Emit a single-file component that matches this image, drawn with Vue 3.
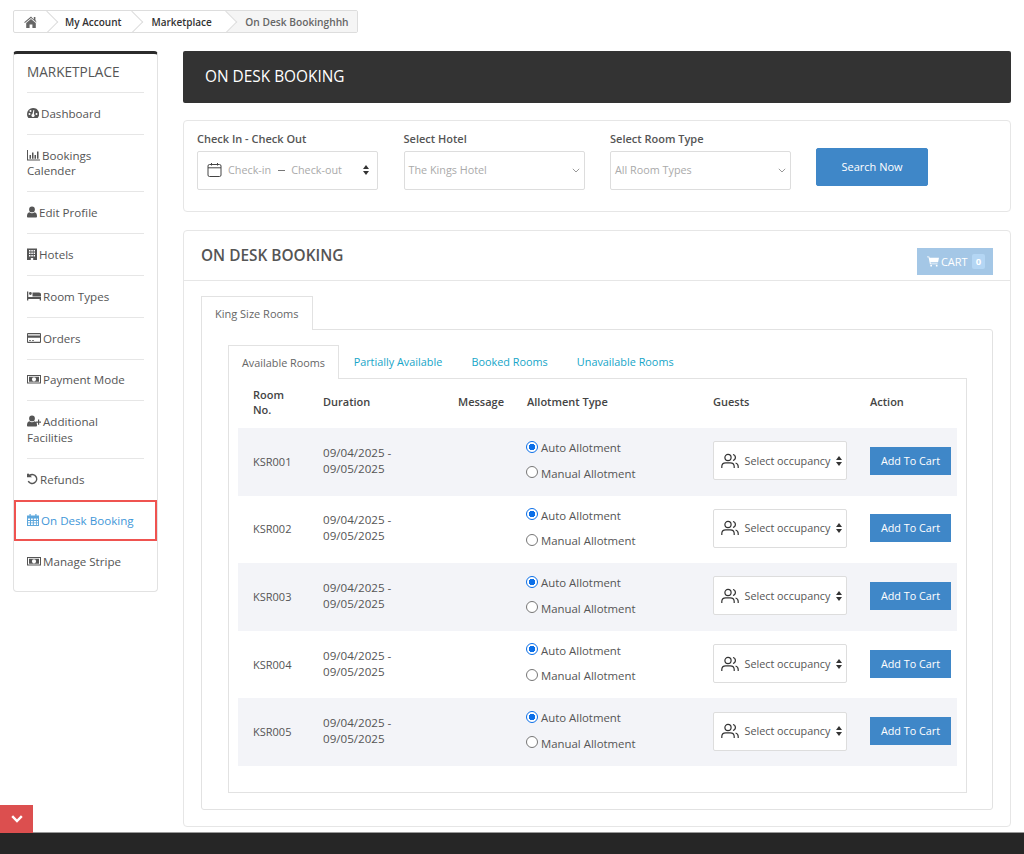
<template>
  <div class="page">
    <div class="content">
      <nav class="crumbs">
        <a class="crumb home">
          <svg width="14" height="12" viewBox="0 0 14 12"><path fill="#666" d="M7 0.6 0.2 6.2l.7.8L7 2l6.1 5 .7-.8-2.4-2V1h-1.6v2.4zM2.2 7v5h3.4V8.4h2.8V12h3.4V7L7 3z" /></svg>
        </a>
        <a class="crumb acct">My Account</a>
        <a class="crumb market">Marketplace</a>
        <a class="crumb last">On Desk Bookinghhh</a>
      </nav>

      <div class="layout">
        <aside class="sidebar">
          <h3>MARKETPLACE</h3>
          <ul>
            <li v-for="item in menu" :key="item.label" :class="{ active: item.active }">
              <svg class="menu-icon" :width="item.w || 13" height="12" :viewBox="`0 0 ${item.w || 13} 12`" v-html="item.icon"></svg>
              {{ item.label }}
            </li>
          </ul>
        </aside>

        <main class="main">
          <div class="banner">ON DESK BOOKING</div>

          <section class="filters">
            <div class="field date">
              <label>Check In - Check Out</label>
              <div class="input">
                <svg width="15" height="16" viewBox="0 0 15 16" fill="none" stroke="#444" stroke-width="1"><rect x="1" y="2.5" width="13" height="12" rx="1.5" /><path d="M1 5.8h13M4.5 1v2.5M10.5 1v2.5" /></svg>
                <span class="ph first">Check-in</span>
                <span class="dash"></span>
                <span class="ph">Check-out</span>
                <span class="updown"></span>
              </div>
            </div>
            <div class="field">
              <label>Select Hotel</label>
              <div class="input select">
                <span class="ph">The Kings Hotel</span>
                <svg width="8" height="5" viewBox="0 0 8 5" fill="none" stroke="#999"><path d="M.8.8 4 4l3.2-3.2" /></svg>
              </div>
            </div>
            <div class="field">
              <label>Select Room Type</label>
              <div class="input select">
                <span class="ph">All Room Types</span>
                <svg width="8" height="5" viewBox="0 0 8 5" fill="none" stroke="#999"><path d="M.8.8 4 4l3.2-3.2" /></svg>
              </div>
            </div>
            <button class="search">Search Now</button>
          </section>

          <section class="booking">
            <header class="booking-head">
              <h2>ON DESK BOOKING</h2>
              <div class="cart">
                <svg width="12" height="11" viewBox="0 0 13 11"><path fill="#fff" d="M0 0h2.400l.4 1.400H13l-1 5H3.800l.3 1.200H11.500v1H3.200L1.700 1H0z" /><circle fill="#fff" cx="4.500" cy="10" r="1" /><circle fill="#fff" cx="10.500" cy="10" r="1" /></svg>
                CART <span class="count">0</span>
              </div>
            </header>

            <div class="booking-body">
              <div class="tabs outer"><span class="tab on">King Size Rooms</span></div>
              <div class="outer-pane">
                <div class="tabs inner">
                  <span v-for="(t, i) in tabs" :key="t" class="tab" :class="{ on: i === 0 }">{{ t }}</span>
                </div>
                <div class="inner-pane">
                  <table>
                    <thead>
                      <tr>
                        <th class="c-room">Room No.</th>
                        <th class="c-dur">Duration</th>
                        <th class="c-msg">Message</th>
                        <th class="c-allot">Allotment Type</th>
                        <th class="c-guest">Guests</th>
                        <th class="c-act">Action</th>
                      </tr>
                    </thead>
                    <tbody>
                      <tr v-for="room in rooms" :key="room">
                        <td>{{ room }}</td>
                        <td class="dates">09/04/2025 - 09/05/2025</td>
                        <td></td>
                        <td class="allot">
                          <label class="radio"><span class="dot checked"></span>Auto Allotment</label>
                          <label class="radio"><span class="dot"></span>Manual Allotment</label>
                        </td>
                        <td>
                          <div class="occupancy">
                            <svg width="18" height="16" viewBox="0 0 18 16" fill="none" stroke="#333" stroke-width="1.200"><circle cx="7" cy="4.500" r="3.100" /><path d="M.8 15v-1.500c0-2.200 1.800-3.700 4-3.700h4.400c2.200 0 4 1.500 4 3.700V15M12 1.500c1.500.4 2.400 1.600 2.400 3s-.9 2.600-2.400 3M14.600 10c1.500.5 2.600 1.800 2.600 3.500V15" /></svg>
                            <span>Select occupancy</span>
                            <span class="updown"></span>
                          </div>
                        </td>
                        <td><button class="add">Add To Cart</button></td>
                      </tr>
                    </tbody>
                  </table>
                </div>
              </div>
            </div>
          </section>
        </main>
      </div>
    </div>

    <button class="collapse">
      <svg width="12" height="8" viewBox="0 0 12 8" fill="none" stroke="#fff" stroke-width="2.400"><path d="M1.200 1.200 6 6l4.800-4.800" /></svg>
    </button>
    <footer class="footer"></footer>
  </div>
</template>

<script setup>
const f = (d) => `<path fill="#555" d="${d}" />`

const money = 'M0 2h14v8.500H0zm1 1v6.500h12V3zm1 .8h10v5H2zM7 4.200a2 2 0 1 0 0 4.200 2 2 0 0 0 0-4.200z'
const user = 'M5 .5a2.900 2.900 0 1 1 0 5.800 2.900 2.900 0 0 1 0-5.800zM2.400 6.200c.7.6 1.600 1 2.600 1s1.900-.4 2.600-1C9.200 6.500 10 8 10 10v.5c0 .6-.5 1-1 1H1c-.5 0-1-.4-1-1V10c0-2 .8-3.500 2.400-3.800z'

const menu = [
  { label: 'Dashboard', w: 12, icon: f('M6 1a6 6 0 0 0-6 6c0 1.500.5 2.900 1.400 4h9.200A6 6 0 0 0 6 1zM2.500 8a1 1 0 1 1 0-2 1 1 0 0 1 0 2zm1-3a1 1 0 1 1 0-2 1 1 0 0 1 0 2zM6 10a1.500 1.500 0 0 1-.6-2.900L6.500 3h.8l-.4 4.200A1.500 1.500 0 0 1 6 10zm3.500-2a1 1 0 1 1 0-2 1 1 0 0 1 0 2z') },
  { label: 'Bookings Calender', icon: f('M0 1h1v9.500h12v1H0zM2.500 6h1.500v3.800H2.500zM5 3.500h1.500v6.300H5zM7.500 6h1.500v3.800H7.500zM10 2.500h1.500v7.300H10z') },
  { label: 'Edit Profile', w: 10, icon: f(user) },
  { label: 'Hotels', w: 10, icon: f('M0 .5h10V12H6.200V10H3.800v2H0zM2 2v1.500h1.500V2zm2.300 0v1.500h1.500V2zm2.300 0v1.500h1.400V2zM2 4.500V6h1.500V4.500zm2.300 0V6h1.500V4.500zm2.300 0V6h1.400V4.500zM2 7v1.500h1.500V7zm2.300 0v1.500h1.500V7zm2.300 0v1.500h1.400V7z') },
  { label: 'Room Types', w: 14, icon: f('M0 1.500h1.300V7H14v3.500h-1.300V9H1.300v1.500H0zM2 3.500a1.400 1.400 0 0 1 2.800 0A1.400 1.400 0 0 1 2 3.500zM5.500 2.500h6.500c1.200 0 2 .9 2 2v2H5.500z') },
  { label: 'Orders', w: 14, icon: f('M1 1h12a1 1 0 0 1 1 1v8a1 1 0 0 1-1 1H1a1 1 0 0 1-1-1V2a1 1 0 0 1 1-1zm0 1.200V3.500h12V2.200zM1 5.800v4h12v-4zM2 8h2v.8H2zm3 0h2v.8H5z') },
  { label: 'Payment Mode', w: 14, icon: f(money) },
  { label: 'Additional Facilities', w: 14, icon: f(user + 'M11 4.500h1.200v2H14v1.200h-1.800v2H11v-2H9V6.500h2z') },
  { label: 'Refunds', w: 11, icon: f('M0 1.200 1 .2l1.400 1.400A5.200 5.200 0 1 1 .6 8.500l1.300-.8a3.700 3.700 0 1 0 1.600-5L5 4.200H0z') },
  { label: 'On Desk Booking', w: 12, active: true, icon: `<path fill="#5da7dc" d="M2.500 0h1.200v1.500h4.600V0h1.200v1.500H12V12H0V1.500h2.500zM1 4.500V6h2V4.500zm3 0V6h1.800V4.500zm2.800 0V6H9V4.500zm3 0V6H11V4.500zM1 7v1.500h2V7zm3 0v1.500h1.800V7zm2.800 0v1.500H9V7zm3 0v1.500H11V7zM1 9.300V11h2V9.300zm3 0V11h1.800V9.300zm2.800 0V11H9V9.300zm3 0V11H11V9.300z" />` },
  { label: 'Manage Stripe', w: 14, icon: f(money) },
]

const tabs = ['Available Rooms', 'Partially Available', 'Booked Rooms', 'Unavailable Rooms']
const rooms = ['KSR001', 'KSR002', 'KSR003', 'KSR004', 'KSR005']
</script>

<style>
html,
body {
  margin: 0;
  background: #fff;
}
</style>

<style scoped>
.page {
  position: relative;
  width: 1024px;
  height: 854px;
  overflow: hidden;
  display: flex;
  flex-direction: column;
  font-family: "Open Sans", "Noto Sans", sans-serif;
  font-size: 11.600px;
  color: #555;
}

.content {
  flex: 1;
  min-height: 0;
  padding: 10px 13px 0;
}

.crumbs {
  display: inline-flex;
  height: 23px;
  border: 1px solid #ddd;
  border-radius: 2px;
  background: #fff;
  overflow: hidden;
  box-sizing: border-box;
  font-size: 10px;
  font-weight: 600;
  color: #333;
  margin-bottom: 18px;
  vertical-align: top;
}

.crumb {
  position: relative;
  display: flex;
  align-items: center;
  padding: 0 22px 0 7px;
}

.crumb.home {
  padding: 0 20px 0 10px;
}

.crumb.market {
  padding: 0 25px 0 8px;
}

.crumb:not(.last)::after {
  content: "";
  position: absolute;
  right: 3px;
  top: 3px;
  width: 15px;
  height: 15px;
  background: #fff;
  border-top: 1px solid #ddd;
  border-right: 1px solid #ddd;
  transform: rotate(45deg);
  z-index: 1;
}

.crumb.last {
  flex: 1;
  margin-left: -12px;
  padding: 0 8px 0 20.500px;
  background: #f5f5f5;
  color: #666;
  font-size: 10.200px;
}

.layout {
  display: flex;
  align-items: flex-start;
  gap: 25px;
}

.sidebar {
  width: 145px;
  height: 541px;
  box-sizing: border-box;
  flex: none;
  border: 1px solid #e2e2e2;
  border-top: 3px solid #2b2b2b;
  border-radius: 4px;
  padding: 0 13px;
}

.sidebar h3 {
  margin: 0;
  height: 39px;
  padding-top: 8px;
  box-sizing: border-box;
  font-size: 13.600px;
  line-height: 19px;
  font-weight: 400;
  color: #555;
  border-bottom: 1px solid #e6e6e6;
}

.sidebar ul {
  list-style: none;
  margin: 0;
  padding: 0;
}

.sidebar li {
  padding: 12.800px 10px 12.550px 0;
  line-height: 15.500px;
  border-bottom: 1px solid #e6e6e6;
}

.sidebar li:last-child,
.sidebar li:nth-last-child(3) {
  border-bottom: 0;
}

.sidebar li.active {
  margin: 0 -13px;
  padding: 11.200px 11px;
  border: 2px solid #ef5350;
  color: #3f97d8;
  white-space: nowrap;
}

.menu-icon {
  vertical-align: -1px;
  margin-right: -1px;
}

.main {
  flex: 1;
  min-width: 0;
}

.banner {
  height: 52px;
  box-sizing: border-box;
  display: flex;
  align-items: center;
  padding: 0 0 1px 22px;
  background: #333;
  color: #fff;
  font-size: 15.400px;
  border-radius: 2px;
  margin-bottom: 17px;
}

.filters {
  height: 92px;
  box-sizing: border-box;
  display: flex;
  gap: 25.500px;
  padding: 10px 13px;
  border: 1px solid #e6e6e6;
  border-radius: 4px;
  margin-bottom: 18px;
}

.field label {
  display: block;
  font-size: 11px;
  font-weight: 600;
  line-height: 16px;
  margin-bottom: 4px;
  color: #555;
}

.input {
  width: 181px;
  height: 39px;
  box-sizing: border-box;
  display: flex;
  align-items: center;
  border: 1px solid #ddd;
  border-radius: 2px;
  padding: 0 9px 1px;
  font-size: 10.800px;
  line-height: 14px;
  color: #aaa;
}

.date .input {
  padding-right: 5px;
}

.select {
  justify-content: space-between;
  padding: 0 4px 1px;
}

.ph.first {
  margin-left: 6px;
}

.dash {
  width: 7px;
  height: 1px;
  background: #777;
  margin: 0 6px 0 7px;
}

.updown {
  display: inline-block;
  position: relative;
  width: 6px;
  height: 10px;
  margin-left: auto;
  margin-right: 3px;
  flex: none;
}

.updown::before,
.updown::after {
  content: "";
  position: absolute;
  left: 0;
  border-left: 3px solid transparent;
  border-right: 3px solid transparent;
}

.updown::before {
  top: 0;
  border-bottom: 4px solid #333;
}

.updown::after {
  bottom: 0;
  border-top: 4px solid #333;
}

.search {
  width: 112px;
  height: 38px;
  margin: 17px 0 0 -0.500px;
  border: 1px solid #3f87c8;
  border-radius: 2px;
  background: #3f87c8;
  color: #fff;
  font: inherit;
  font-size: 11px;
  padding: 0 0 2px;
}

.booking {
  height: 597px;
  box-sizing: border-box;
  border: 1px solid #e6e6e6;
  border-radius: 4px;
}

.booking-head {
  height: 50px;
  box-sizing: border-box;
  display: flex;
  align-items: flex-start;
  justify-content: space-between;
  padding: 16px 17px 0;
  border-bottom: 1px solid #e6e6e6;
}

.booking-head h2 {
  margin: 0;
  font-size: 15.400px;
  line-height: 17px;
  font-weight: 600;
  color: #555;
}

.cart {
  width: 76px;
  height: 27px;
  box-sizing: border-box;
  margin-top: 1px;
  padding-left: 2px;
  display: flex;
  align-items: center;
  justify-content: center;
  gap: 2px;
  background: #a4c7e6;
  color: #fff;
  font-size: 11px;
}

.count {
  background: #b4d6f4;
  font-size: 9.500px;
  font-weight: 700;
  padding: 1px 4px;
  border-radius: 2px;
  margin-left: 2px;
}

.booking-body {
  padding: 15px 17px 0;
}

.tabs {
  display: flex;
  height: 34px;
  position: relative;
}

.tab {
  display: flex;
  align-items: center;
  padding: 0 14.600px 1px;
  font-size: 10.850px;
  color: #15a5c8;
  box-sizing: border-box;
}

.outer .tab {
  padding: 0 13px 1px;
  font-size: 11px;
}

.tab.on {
  height: 34px;
  background: #fff;
  color: #666;
  border: 1px solid #e2e2e2;
  border-bottom: 0;
  position: relative;
  z-index: 1;
}

.inner .tab.on {
  padding: 0 13px 1px;
}

.outer-pane {
  height: 481px;
  box-sizing: border-box;
  margin-top: -1px;
  padding: 15px 25px 0 26px;
  border: 1px solid #e2e2e2;
  border-radius: 0 3px 3px 3px;
}

.inner-pane {
  height: 415px;
  box-sizing: border-box;
  margin-top: -1px;
  padding: 0 9px;
  border: 1px solid #e2e2e2;
}

table {
  width: 719px;
  border-collapse: collapse;
  table-layout: fixed;
}

th {
  height: 49px;
  padding: 0 15px 3px;
  box-sizing: border-box;
  text-align: left;
  font-size: 11px;
  font-weight: 600;
  line-height: 15.500px;
  color: #444;
}

.c-room {
  width: 70px;
}

.c-dur {
  width: 135px;
}

.c-msg {
  width: 69px;
}

.c-allot {
  width: 186px;
}

.c-guest {
  width: 157px;
}

td {
  height: 67.600px;
  padding: 0 15px;
  box-sizing: border-box;
  font-size: 11px;
  line-height: 16px;
  color: #555;
}

td.dates {
  font-size: 11.600px;
  padding: 0 30px 2px 15px;
}

td.allot {
  padding: 0 0 2px 15px;
}

tbody tr:nth-child(odd) {
  background: #f3f4f8;
}

td:nth-child(5),
td:nth-child(6) {
  padding: 0 0 0 15px;
}

.radio {
  display: flex;
  align-items: center;
  height: 25.500px;
  margin-left: -1px;
  font-size: 11.400px;
  font-weight: 500;
  color: #555;
}

.dot {
  width: 12px;
  height: 12px;
  box-sizing: border-box;
  border: 1px solid #767676;
  border-radius: 50%;
  margin-right: 3px;
  margin-top: -3px;
  background: #fff;
}

.dot.checked {
  border: 1.500px solid #0b6fe8;
  background: radial-gradient(circle, #0b6fe8 0 3px, #fff 3.500px);
}

.occupancy {
  width: 134px;
  height: 39px;
  box-sizing: border-box;
  margin-top: -2px;
  display: flex;
  align-items: center;
  gap: 5.500px;
  background: #fff;
  border: 1px solid #ddd;
  border-radius: 2px;
  padding: 0 4px 0 7px;
  font-size: 10.800px;
  white-space: nowrap;
}

.occupancy svg {
  flex: none;
}

.add {
  display: block;
  width: 81px;
  height: 28px;
  margin-top: -2px;
  border: 0;
  background: #3f87c8;
  color: #fff;
  font: inherit;
  font-size: 10.800px;
  padding: 0;
}

.collapse {
  position: absolute;
  left: 0;
  bottom: 21px;
  width: 33px;
  height: 28px;
  border: 0;
  background: #dc4f4f;
  display: flex;
  align-items: center;
  justify-content: center;
  padding: 0;
}

.footer {
  flex: none;
  height: 21px;
  border-top: 1px solid #999;
  background: #262626;
}
</style>
